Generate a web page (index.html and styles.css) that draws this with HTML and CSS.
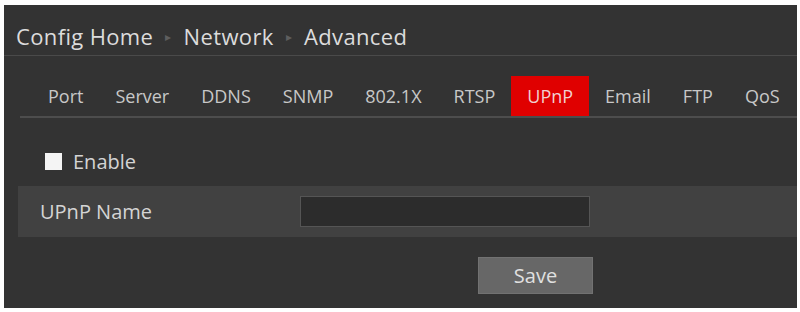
FILE: index.html
```html
<!DOCTYPE html>
<html lang="en">
<head>
    <meta charset="UTF-8">
    <meta name="viewport" content="width=device-width, initial-scale=1.0">
    <title>UPnP</title>
    <link rel="stylesheet" href="styles.css">
</head>
<body>
    <div class="panel">
        <div class="crumbs">
            <span>Config Home</span><span class="arrow">&#9656;</span><span>Network</span><span class="arrow">&#9656;</span><span>Advanced</span>
        </div>
        <div class="tabs">
            <div class="tab">Port</div>
            <div class="tab">Server</div>
            <div class="tab">DDNS</div>
            <div class="tab">SNMP</div>
            <div class="tab">802.1X</div>
            <div class="tab">RTSP</div>
            <div class="tab active">UPnP</div>
            <div class="tab">Email</div>
            <div class="tab">FTP</div>
            <div class="tab">QoS</div>
        </div>
        <div class="form">
            <label class="check"><span class="box"></span>Enable</label>
            <div class="row">
                <div class="label">UPnP Name</div>
                <div class="input"></div>
            </div>
            <div class="actions">
                <div class="btn">Save</div>
            </div>
        </div>
    </div>
</body>
</html>
```

FILE: styles.css
```css
body {
    margin: 0;
    background: #fff;
    font-family: "Open Sans", "Noto Sans", sans-serif;
}
.panel {
    margin: 5px 3px 0 4px;
    height: 303px;
    background: #333333;
    color: #d8d8d8;
    box-sizing: border-box;
    overflow: hidden;
}
.crumbs {
    height: 51px;
    box-sizing: border-box;
    display: flex;
    align-items: center;
    padding: 11px 0 0 12px;
    line-height: 30px;
    font-size: 22px;
    color: #dcdcdc;
    border-bottom: 1px solid #4a4a4a;
    letter-spacing: 0.35px;
}
.crumbs .arrow {
    font-size: 12px;
    color: #5e5e5e;
    margin: 2px 12px 0 12px;
}
.tabs {
    display: flex;
    margin-left: 16px;
    margin-top: 20px;
    padding-left: 12px;
    border-bottom: 2px solid #4d4d4d;
    height: 40px;
}
.tab {
    padding: 0 16px;
    line-height: 41px;
    font-size: 18px;
    color: #c8c8c8;
}
.tab.active {
    background: #e00000;
    color: #f0d0d0;
}
.form {
    padding-top: 33px;
}
.check {
    display: flex;
    align-items: center;
    margin-left: 41px;
    font-size: 20px;
    color: #d4d4d4;
    height: 20px;
}
.check .box {
    width: 17px;
    height: 17px;
    background: #f4f4f4;
    margin-right: 11px;
}
.row {
    display: flex;
    align-items: center;
    margin: 15px 0 0 14px;
    height: 51px;
    background: #414141;
}
.row .label {
    width: 282px;
    box-sizing: border-box;
    padding-left: 22px;
    font-size: 20px;
    color: #d4d4d4;
}
.row .input {
    width: 288px;
    height: 29px;
    background: #2c2c2c;
    border: 1px solid #555;
}
.actions {
    display: flex;
    margin-top: 20px;
    padding-left: 474px;
}
.btn {
    width: 113px;
    height: 35px;
    line-height: 35px;
    text-align: center;
    background: #676767;
    border: 1px solid #727272;
    color: #e0e0e0;
    font-size: 20px;
}
```
